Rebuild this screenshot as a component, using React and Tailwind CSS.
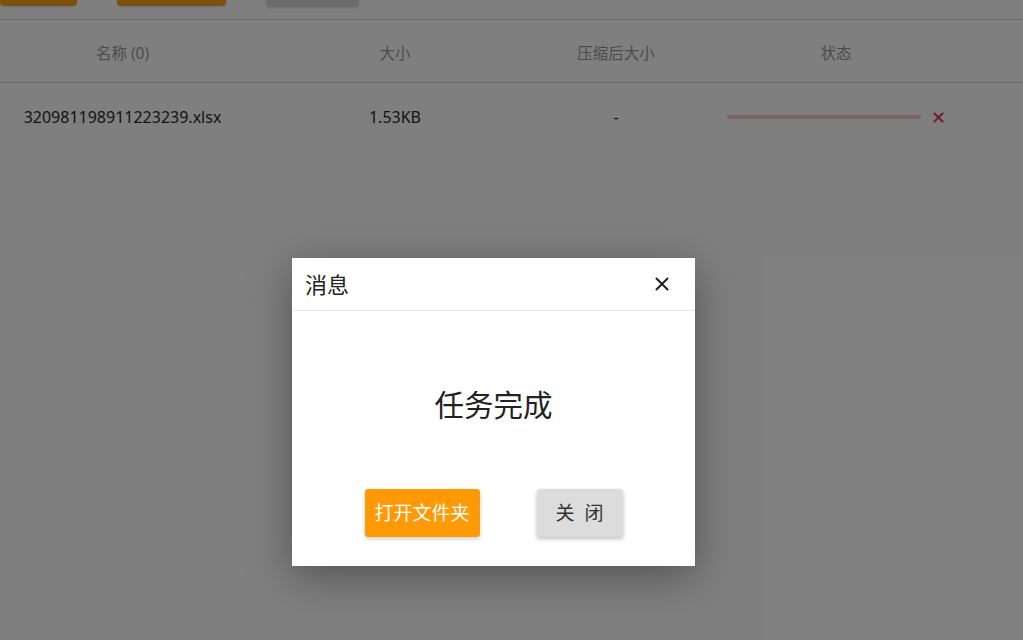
import React from "react";

const font = { fontFamily: '"Noto Sans", "Noto Sans CJK SC", sans-serif' };

const App = () => {
  return (
    <div className="relative h-[640px] w-[1023px] overflow-hidden bg-white" style={font}>
      {/* toolbar (scrolled mostly out of view) */}
      <div className="flex h-[20px] items-end border-b border-[#d6d6d6]">
        <div className="-mt-[30px] flex gap-[40px] self-start">
          <div className="h-[36px] w-[77px] rounded bg-[#f7a21c] shadow" />
          <div className="h-[36px] w-[109px] rounded bg-[#f7a21c] shadow" />
          <div className="h-[37px] w-[93px] rounded bg-[#d9d9d9] shadow" />
        </div>
      </div>

      {/* table */}
      <div className="grid h-[63px] grid-cols-[245px_300px_142px_298px] items-center border-b border-[#d6d6d6] pt-[5px] text-[15.5px] text-[#999]">
        <div className="text-center">名称 (0)</div>
        <div className="text-center">大小</div>
        <div className="text-center">压缩后大小</div>
        <div className="text-center">状态</div>
      </div>
      <div className="grid h-[68px] grid-cols-[245px_300px_142px_298px] items-center text-[16px] text-[#2a2a2a]">
        <div className="text-center">320981198911223239.xlsx</div>
        <div className="text-center">1.53KB</div>
        <div className="text-center">-</div>
        <div className="flex items-center justify-center gap-[10px]">
          <div className="h-[4px] w-[194px] rounded-full bg-[#f5c6cf]" />
          <span className="text-[18px] leading-none text-[#e02e3c]">✕</span>
        </div>
      </div>

      {/* overlay */}
      <div className="absolute inset-0 bg-black/50" />

      {/* dialog */}
      <div className="absolute left-[292px] top-[258px] flex h-[308px] w-[403px] flex-col bg-white shadow-[0_10px_40px_rgba(0,0,0,0.35)]">
        <div className="flex h-[53px] items-center justify-between border-b border-[#e8e8e8] pl-[13px] pr-[26px]">
          <span className="text-[22px] text-[#222]">消息</span>
          <svg width="14" height="14" viewBox="0 0 14 14" className="text-[#222]">
            <path d="M1.5 1.5 12.5 12.5M12.5 1.5 1.5 12.5" stroke="currentColor" strokeWidth="2" strokeLinecap="round" />
          </svg>
        </div>
        <div className="flex flex-1 items-center justify-center pt-[10px] text-[29.5px] text-[#222]">
          任务完成
        </div>
        <div className="flex justify-center gap-[57px] pb-[29px]">
          <button className="h-[48px] w-[115px] rounded-[3px] bg-[#ff9a05] text-[19px] text-white shadow-[0_2px_4px_rgba(0,0,0,0.2)]">
            打开文件夹
          </button>
          <button className="h-[48px] w-[86px] rounded-[3px] bg-[#dcdcdc] text-[19px] text-[#333] shadow-[0_2px_4px_rgba(0,0,0,0.25)]">
            关&nbsp;&nbsp;闭
          </button>
        </div>
      </div>
    </div>
  );
};

export default App;
